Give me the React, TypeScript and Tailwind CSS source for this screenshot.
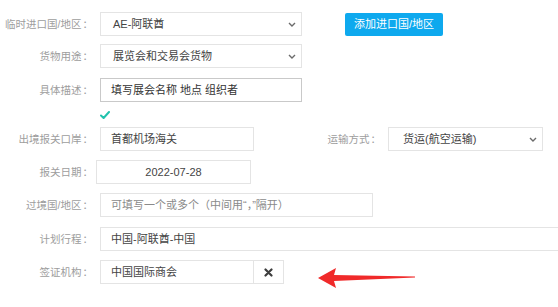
// Export declaration form (出境报关 / 临时进口) — static replica

const FONT = "font-['Liberation_Sans','Noto_Sans_CJK_SC',sans-serif]";

function Label({ text, w = 'w-[100px]' }: { text: string; w?: string }) {
  return (
    <div className={`${w} shrink-0 pr-[7px] text-right text-[10.5px] leading-none text-[#9d9d9d] whitespace-nowrap`}>
      {text}
      <span className="ml-[1px]">：</span>
    </div>
  );
}

function Chevron() {
  return (
    <svg width="8" height="5" viewBox="0 0 8 5" className="shrink-0">
      <polyline points="1,1 4,4 7,1" fill="none" stroke="#6b6b6b" strokeWidth="1.4" />
    </svg>
  );
}

function Select({ value, w, pl = 'pl-[12px]' }: { value: string; w: string; pl?: string }) {
  return (
    <div className={`${w} h-[24px] border border-[#e4e4e4] bg-white flex items-center ${pl} pr-[5px] text-[11px] text-[#444]`}>
      <span className="flex-1 whitespace-nowrap">{value}</span>
      <Chevron />
    </div>
  );
}

function Input({
  value,
  w,
  tone = 'text-[#444]',
  border = 'border-[#e4e4e4]',
  center = false,
}: {
  value: string;
  w: string;
  tone?: string;
  border?: string;
  center?: boolean;
}) {
  return (
    <div
      className={`${w} shrink-0 h-[24px] border ${border} bg-white flex items-center ${center ? 'justify-center' : 'pl-[10px]'} text-[11px] ${tone} whitespace-nowrap overflow-hidden`}
    >
      {value}
    </div>
  );
}

export default function App() {
  return (
    <div className={`${FONT} relative w-[558px] h-[307px] overflow-hidden bg-white`}>
      <div className="flex flex-col">
        {/* ── 临时进口国 ── */}
        <div className="mt-[12px] flex items-center">
          <Label text="临时进口国/地区" />
          <Select value="AE-阿联酋" w="w-[202px]" />
          <button className="ml-[43px] mt-[1px] h-[23px] px-[9px] rounded-[2px] bg-[#0ea9ee] text-white text-[11px] leading-none">
            添加进口国/地区
          </button>
        </div>

        {/* ── 货物用途 ── */}
        <div className="mt-[8px] flex items-center">
          <Label text="货物用途" />
          <Select value="展览会和交易会货物" w="w-[202px]" />
        </div>

        {/* ── 具体描述 ── */}
        <div className="mt-[10px] flex items-center">
          <Label text="具体描述" />
          <Input value="填写展会名称 地点 组织者" w="w-[202px]" border="border-[#c9c9c9]" tone="text-[#333]" />
        </div>

        {/* valid tick */}
        <div className="h-[25px] pl-[100px] flex items-center">
          <svg width="10" height="8" viewBox="0 0 10 8">
            <path d="M1 4.5 L3.6 7 L9 1" fill="none" stroke="#22c3ad" strokeWidth="2" strokeLinecap="round" strokeLinejoin="round" />
          </svg>
        </div>

        {/* ── 出境报关口岸 / 运输方式 ── */}
        <div className="flex items-center">
          <Label text="出境报关口岸" />
          <Input value="首都机场海关" w="w-[154px]" />
          <Label text="运输方式" w="w-[134px]" />
          <Select value="货运(航空运输)" w="w-[155px]" pl="pl-[14px]" />
        </div>

        {/* ── 报关日期 ── */}
        <div className="mt-[9px] flex items-center">
          <Label text="报关日期" />
          <div className="-ml-[4px]">
            <Input value="2022-07-28" w="w-[155px]" center />
          </div>
        </div>

        {/* ── 过境国 ── */}
        <div className="mt-[9px] flex items-center">
          <Label text="过境国/地区" />
          <Input value="可填写一个或多个（中间用“，”隔开）" w="w-[273px]" tone="text-[#8a8a8a]" />
        </div>

        {/* ── 计划行程 ── */}
        <div className="mt-[10px] flex items-center">
          <Label text="计划行程" />
          <Input value="中国-阿联酋-中国" w="w-[470px]" />
        </div>

        {/* ── 签证机构 ── */}
        <div className="mt-[9px] flex items-center">
          <Label text="签证机构" />
          <Input value="中国国际商会" w="w-[154px]" />
          <div className="w-[30px] h-[24px] border border-l-0 border-[#e4e4e4] flex items-center justify-center">
            <svg width="9" height="9" viewBox="0 0 9 9">
              <path d="M1.5 1.5 L7.5 7.5 M7.5 1.5 L1.5 7.5" stroke="#3d3d3d" strokeWidth="2.2" strokeLinecap="round" />
            </svg>
          </div>
        </div>
      </div>

      {/* red annotation arrow */}
      <svg className="absolute left-[316px] top-[266px]" width="102" height="24" viewBox="0 0 102 24">
        <path d="M2 12 L20 2 L18 9 L99 10.5 L99 11.5 L18 15 L20 22 Z" fill="#f02a2a" />
      </svg>
    </div>
  );
}
